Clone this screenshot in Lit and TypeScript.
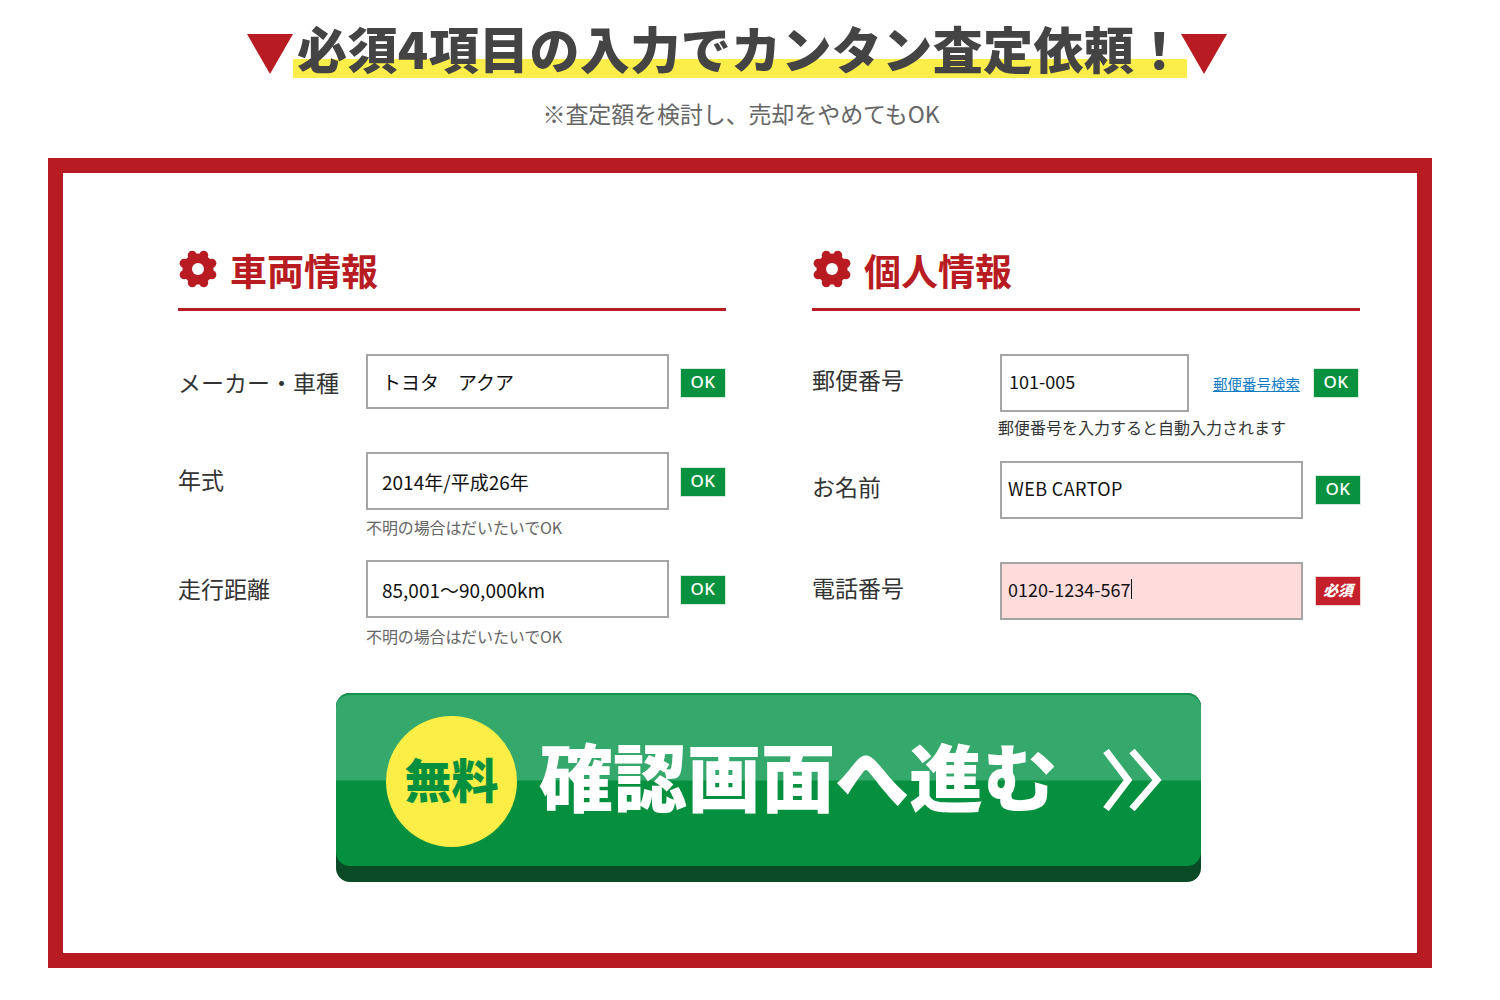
import { LitElement, html, svg, css } from "lit";
import { customElement } from "lit/decorators.js";

const gear = html`<svg class="gear" viewBox="0 0 40 40" aria-hidden="true">
  <g fill="#b81c22"><circle cx="20" cy="20" r="15.5"/>
  ${[0, 45, 90, 135, 180, 225, 270, 315].map((a) => {
    const r = (a * Math.PI) / 180 + Math.PI / 8;
    return svg`<circle cx="${20 + 15 * Math.cos(r)}" cy="${20 + 15 * Math.sin(r)}" r="4.5"/>`;
  })}</g>
  <circle cx="20" cy="20" r="6" fill="#fff"/>
</svg>`;

const tri = html`<svg class="tri" viewBox="0 0 46 40" aria-hidden="true"><polygon points="0,0 46,0 23,40" fill="#b81c22"/></svg>`;

@customElement("app-root")
export class AppRoot extends LitElement {
  static styles = css`
    :host {
      display: block;
      width: 1500px;
      height: 1000px;
      overflow: hidden;
      background: #fff;
      font-family: "Noto Sans CJK JP", "Noto Sans", sans-serif;
      color: #333;
      box-sizing: border-box;
      padding: 22px 68px 0 48px;
    }
    .title {
      display: flex;
      align-items: flex-start;
      padding-left: 199px;
      height: 56px;
    }
    .tri { width: 46px; height: 40px; margin-top: 12px; flex: none; }
    .tri + h1 + .tri { margin-left: -6px; }
    .title h1 {
      margin: 0;
      width: 894px;
      flex: none;
      height: 56px;
      box-sizing: border-box;
      padding: 0 0 0 4px;
      font-size: 50px;
      line-height: 56px;
      font-weight: 900;
      letter-spacing: 0.4px;
      color: #444;
      white-space: nowrap;
      background: linear-gradient(transparent 37px, #fcee4a 37px);
    }
    .title h1 span { display: block; margin-top: -3px; }
    .sub {
      margin: 19px 0 0;
      padding-left: 2px;
      text-align: center;
      font-size: 23px;
      letter-spacing: -0.1px;
      line-height: 32px;
      color: #666;
    }
    .panel {
      margin-top: 29px;
      width: 1384px;
      height: 810px;
      box-sizing: border-box;
      border: 15px solid #b81c22;
      padding: 76px 0 0 115px;
    }
    .cols { display: grid; grid-template-columns: 548px 548px; column-gap: 86px; }
    .head {
      display: flex;
      align-items: center;
      height: 59px;
      border-bottom: 3px solid #b81c22;
      gap: 12px;
    }
    .gear { width: 40px; height: 40px; flex: none; margin-top: -20px; }
    .head h2 {
      margin: -18px 0 0;
      font-size: 37px;
      line-height: 46px;
      font-weight: 700;
      color: #b81c22;
    }
    .row {
      display: grid;
      grid-template-columns: 188px auto 1fr;
      align-items: center;
    }
    .label { font-size: 23px; line-height: 32px; color: #333; white-space: nowrap; }
    .l2 .label { margin-top: -4px; }
    .l3 .label { margin-top: -2px; }
    .right .label { margin-top: -8px; }
    .field {
      box-sizing: border-box;
      width: 303px;
      height: 58px;
      border: 2px solid #a5a5a5;
      background: #fff;
      display: flex;
      align-items: center;
      padding-left: 14px;
      font-size: 19px;
      color: #111;
      white-space: nowrap;
    }
    .right .field { padding: 0 0 4px 6px; font-size: 18px; }
    .short { height: 55px; }
    .right .zip { width: 189px; padding-left: 7px; }
    .right .wide { letter-spacing: 0.4px; }
    .pink { background: #ffdcdc; }
    .caret { display: inline-block; width: 1px; height: 20px; background: #111; margin-left: 1px; }
    .side { display: flex; align-items: center; justify-content: flex-end; margin: 2px 1px 0 0; }
    .badge {
      width: 44px;
      height: 28px;
      box-sizing: border-box;
      background: #08923f;
      color: #fff;
      font-size: 17px;
      line-height: 26px;
      text-align: center;
      letter-spacing: 0.5px;
      font-family: "Noto Sans", sans-serif;
      font-weight: 500;
      box-shadow: 0 0 0 1px #d7e9dc;
    }
    .badge.req {
      background: #c4202c;
      font-family: "Noto Sans CJK JP", sans-serif;
      font-style: italic;
      font-weight: 900;
      font-size: 15px;
      letter-spacing: 0;
      box-shadow: 0 0 0 1px #f1d3d3;
    }
    .link { font-size: 14.5px; color: #0f7cc4; text-decoration: underline; margin-right: 14px; white-space: nowrap; }
    .hint {
      grid-column: 2 / -1;
      font-size: 16px;
      line-height: 24px;
      letter-spacing: -0.1px;
      color: #666;
      margin-top: 5px;
      white-space: nowrap;
    }
    .right .hint { color: #333; margin-left: -2px; margin-top: 3px; letter-spacing: 0; }
    .l1 { margin-top: 43px; }
    .l2 { margin-top: 43px; }
    .l3 { margin-top: 21px; }
    .l3 .hint { margin-top: 6px; }
    .r1 { margin-top: 43px; }
    .r2 { margin-top: 22px; }
    .r3 { margin-top: 43px; }
    .right .side { margin: 0; }
    .right .r1 .side { margin: 0 2px 0 0; }
    .cta {
      margin: 45px 0 0 158px;
      width: 865px;
      height: 189px;
      box-sizing: border-box;
      border-radius: 14px;
      background: #0a4a24;
      padding-bottom: 16px;
    }
    .cta-face {
      height: 100%;
      border-radius: 14px;
      background: linear-gradient(#35a86c 0, #35a86c 85px, #05903f 86px, #05903f 100%);
      border-top: 2px solid #14934f;
      box-sizing: border-box;
      display: flex;
      align-items: center;
      padding-left: 50px;
    }
    .free {
      width: 131px;
      height: 131px;
      border-radius: 50%;
      background: #fcee46;
      color: #05903f;
      font-size: 47px;
      font-weight: 900;
      line-height: 123px;
      text-align: center;
      flex: none;
      white-space: nowrap;
      margin-top: 2px;
    }
    .cta-text {
      margin-left: 22px;
      color: #fff;
      font-size: 74px;
      font-weight: 900;
      line-height: 90px;
      white-space: nowrap;
      margin-top: -14px;
    }
    .chev { width: 60px; height: 62px; margin-left: 46px; margin-top: -2px; flex: none; }
  `;

  render() {
    return html`
      <div class="title">
        ${tri}
        <h1><span>必須4項目の入力でカンタン査定依頼！</span></h1>
        ${tri}
      </div>
      <p class="sub">※査定額を検討し、売却をやめてもOK</p>
      <section class="panel">
        <div class="cols">
          <div class="left">
            <div class="head">${gear}<h2>車両情報</h2></div>
            <div class="row l1">
              <div class="label">メーカー・車種</div>
              <div class="field short">トヨタ　アクア</div>
              <div class="side"><span class="badge">OK</span></div>
            </div>
            <div class="row l2">
              <div class="label">年式</div>
              <div class="field">2014年/平成26年</div>
              <div class="side"><span class="badge">OK</span></div>
              <div class="hint">不明の場合はだいたいでOK</div>
            </div>
            <div class="row l3">
              <div class="label">走行距離</div>
              <div class="field">85,001〜90,000km</div>
              <div class="side"><span class="badge">OK</span></div>
              <div class="hint">不明の場合はだいたいでOK</div>
            </div>
          </div>
          <div class="right">
            <div class="head">${gear}<h2>個人情報</h2></div>
            <div class="row r1">
              <div class="label">郵便番号</div>
              <div class="field zip">101-005</div>
              <div class="side"><a class="link">郵便番号検索</a><span class="badge">OK</span></div>
              <div class="hint">郵便番号を入力すると自動入力されます</div>
            </div>
            <div class="row r2">
              <div class="label">お名前</div>
              <div class="field wide">WEB CARTOP</div>
              <div class="side"><span class="badge">OK</span></div>
            </div>
            <div class="row r3">
              <div class="label">電話番号</div>
              <div class="field pink">0120-1234-567<span class="caret"></span></div>
              <div class="side"><span class="badge req">必須</span></div>
            </div>
          </div>
        </div>
        <div class="cta">
          <div class="cta-face">
            <div class="free">無料</div>
            <div class="cta-text">確認画面へ進む</div>
            <svg class="chev" viewBox="0 0 60 62" aria-hidden="true">
              <path d="M3 2 L25 31 L3 60 M29 2 L54 31 L29 60" fill="none" stroke="#fff" stroke-width="7" stroke-linejoin="miter"/>
            </svg>
          </div>
        </div>
      </section>
    `;
  }
}
